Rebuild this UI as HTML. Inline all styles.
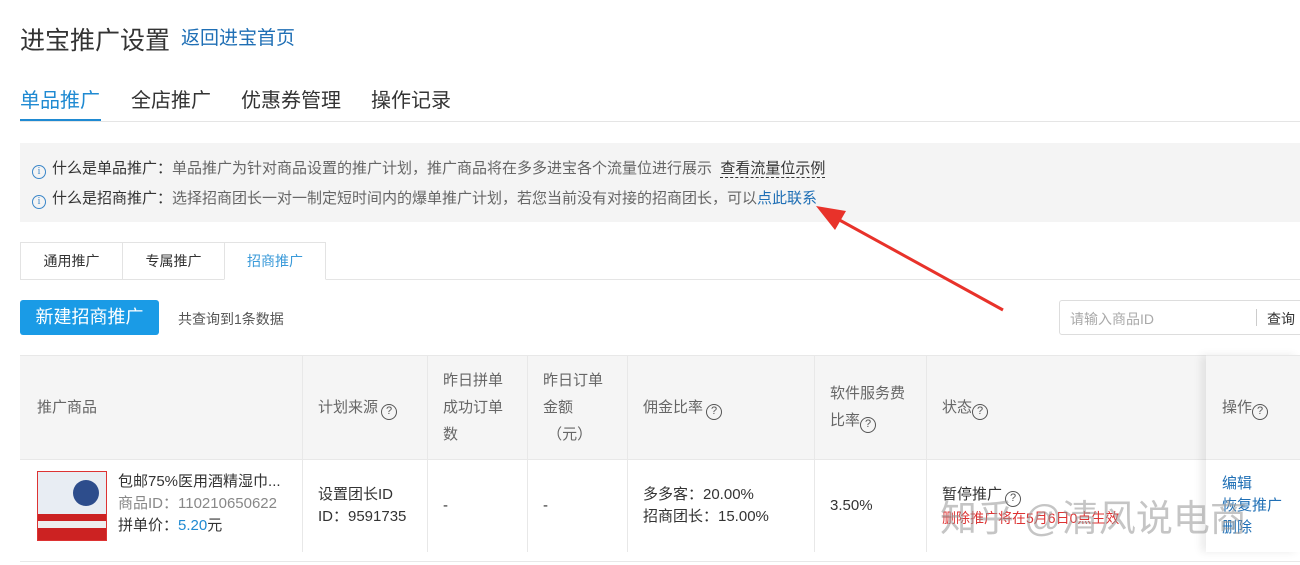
<!DOCTYPE html>
<html><head><meta charset="utf-8"><style>
*{margin:0;padding:0;box-sizing:border-box}
body{width:1300px;height:565px;overflow:hidden;background:#fff;font-family:"Liberation Sans","Noto Sans CJK SC",sans-serif;color:#333;position:relative}
.a{position:absolute;white-space:nowrap}
.q{display:inline-block;width:16px;height:16px;border:1.3px solid #555;border-radius:50%;font-size:11px;line-height:13px;text-align:center;color:#555;vertical-align:-2px;margin-left:3px}
.i{display:inline-block;width:14px;height:14px;border:1px solid #3a86c8;border-radius:50%;font-size:10px;line-height:12px;text-align:center;color:#3a86c8;vertical-align:-1px;margin-right:6px;font-family:"Liberation Serif",serif}
.vl{position:absolute;top:355px;height:197px;width:1px;background:#e8e8e8}
.h{position:absolute;font-size:15px;color:#666;line-height:27px}
.c{position:absolute;font-size:15px;color:#333;line-height:22px}
</style></head><body>
<div class="a" style="left:20px;top:21px;font-size:25px;color:#333">进宝推广设置</div>
<div class="a" style="left:181px;top:23px;font-size:19px;color:#1f6fb5">返回进宝首页</div>
<div class="a" style="left:20px;top:84px;font-size:20px;color:#1f8ad2">单品推广</div>
<div class="a" style="left:131px;top:84px;font-size:20px">全店推广</div>
<div class="a" style="left:241px;top:84px;font-size:20px">优惠券管理</div>
<div class="a" style="left:371px;top:84px;font-size:20px">操作记录</div>
<div class="a" style="left:20px;top:121px;width:1280px;height:1px;background:#e5e5e5"></div>
<div class="a" style="left:20px;top:119px;width:81px;height:2px;background:#1f8ad2"></div>
<div class="a" style="left:20px;top:143px;width:1280px;height:79px;background:#f4f4f4"></div>
<div class="a" style="left:32px;top:157px;font-size:15px;color:#666"><span class="i">i</span><span style="color:#333">什么是单品推广：</span>单品推广为针对商品设置的推广计划，推广商品将在多多进宝各个流量位进行展示 &nbsp;<span style="color:#333;border-bottom:1px dashed #333">查看流量位示例</span></div>
<div class="a" style="left:32px;top:187px;font-size:15px;color:#666"><span class="i">i</span><span style="color:#333">什么是招商推广：</span>选择招商团长一对一制定短时间内的爆单推广计划，若您当前没有对接的招商团长，可以<span style="color:#1f6fb5">点此联系</span></div>
<div class="a" style="left:20px;top:279px;width:1280px;height:1px;background:#e5e5e5"></div>
<div class="a" style="left:20px;top:242px;width:103px;height:38px;border:1px solid #e3e3e3;background:#fff;font-size:14px;text-align:center;line-height:36px">通用推广</div>
<div class="a" style="left:122px;top:242px;width:103px;height:38px;border:1px solid #e3e3e3;background:#fff;font-size:14px;text-align:center;line-height:36px">专属推广</div>
<div class="a" style="left:224px;top:242px;width:102px;height:38px;border:1px solid #e3e3e3;border-bottom-color:#fff;background:#fff;font-size:14px;text-align:center;line-height:36px;color:#3a9ad9">招商推广</div>
<div class="a" style="left:20px;top:300px;width:139px;height:35px;background:#1a9be6;border-radius:3px;color:#fff;font-size:18px;text-align:center;line-height:35px">新建招商推广</div>
<div class="a" style="left:178px;top:309px;font-size:14px;color:#555">共查询到1条数据</div>
<div class="a" style="left:1059px;top:300px;width:245px;height:35px;border:1px solid #ddd;border-radius:3px"></div>
<div class="a" style="left:1070px;top:309px;font-size:14px;color:#aaa">请输入商品ID</div>
<div class="a" style="left:1256px;top:309px;width:1px;height:17px;background:#ccc"></div>
<div class="a" style="left:1267px;top:309px;font-size:14px;color:#333">查询</div>
<div class="a" style="left:20px;top:355px;width:1280px;height:105px;background:#f5f5f5;border-top:1px solid #e8e8e8;border-bottom:1px solid #e8e8e8"></div>
<div class="a" style="left:20px;top:561px;width:1280px;height:1px;background:#e8e8e8"></div>
<div class="vl" style="left:302px"></div><div class="vl" style="left:427px"></div><div class="vl" style="left:527px"></div><div class="vl" style="left:627px"></div><div class="vl" style="left:814px"></div><div class="vl" style="left:926px"></div>
<div class="a" style="left:1206px;top:355px;width:94px;height:197px;box-shadow:-5px 0 8px rgba(0,0,0,.08)"></div>
<div class="h" style="left:37px;top:394px">推广商品</div>
<div class="h" style="left:318px;top:394px">计划来源<span class="q">?</span></div>
<div class="h" style="left:443px;top:367px">昨日拼单<br>成功订单<br>数</div>
<div class="h" style="left:543px;top:367px">昨日订单<br>金额<br>&nbsp;（元）</div>
<div class="h" style="left:643px;top:394px">佣金比率<span class="q">?</span></div>
<div class="h" style="left:830px;top:380px">软件服务费<br>比率<span class="q" style="margin-left:0">?</span></div>
<div class="h" style="left:942px;top:394px">状态<span class="q" style="margin-left:0">?</span></div>
<div class="h" style="left:1222px;top:394px">操作<span class="q" style="margin-left:0">?</span></div>
<div class="a" style="left:37px;top:471px;width:70px;height:70px;border:1px solid #d33;background:linear-gradient(#e8edf3 0 62%,#c22 62% 72%,#eee 72% 82%,#c22 82%)"></div>
<div class="a" style="left:73px;top:480px;width:26px;height:26px;border-radius:50%;background:#2d4d8c"></div>
<div class="c" style="left:118px;top:471px">包邮75%医用酒精湿巾...<br><span style="color:#888">商品ID：110210650622</span><br>拼单价：<span style="color:#1f8ad2">5.20</span>元</div>
<div class="c" style="left:318px;top:484px">设置团长ID<br>ID：9591735</div>
<div class="c" style="left:443px;top:495px">-</div>
<div class="c" style="left:543px;top:495px">-</div>
<div class="c" style="left:643px;top:484px">多多客：20.00%<br>招商团长：15.00%</div>
<div class="c" style="left:830px;top:495px">3.50%</div>
<div class="c" style="left:942px;top:484px">暂停推广<span class="q">?</span><br><span style="color:#d33;font-size:14px">删除推广将在5月6日0点生效</span></div>
<div class="c" style="left:1222px;top:473px;color:#1f6fb5">编辑<br>恢复推广<br>删除</div>
<div class="a" style="left:940px;top:488px;font-size:37px;color:rgba(150,150,150,.55)">知乎 @清风说电商</div>
<svg class="a" style="left:0;top:0" width="1300" height="565"><line x1="1003" y1="310" x2="834" y2="217" stroke="#e8322a" stroke-width="3"/><polygon points="816,206 846,211 835,230" fill="#e8322a"/></svg>
</body></html>
